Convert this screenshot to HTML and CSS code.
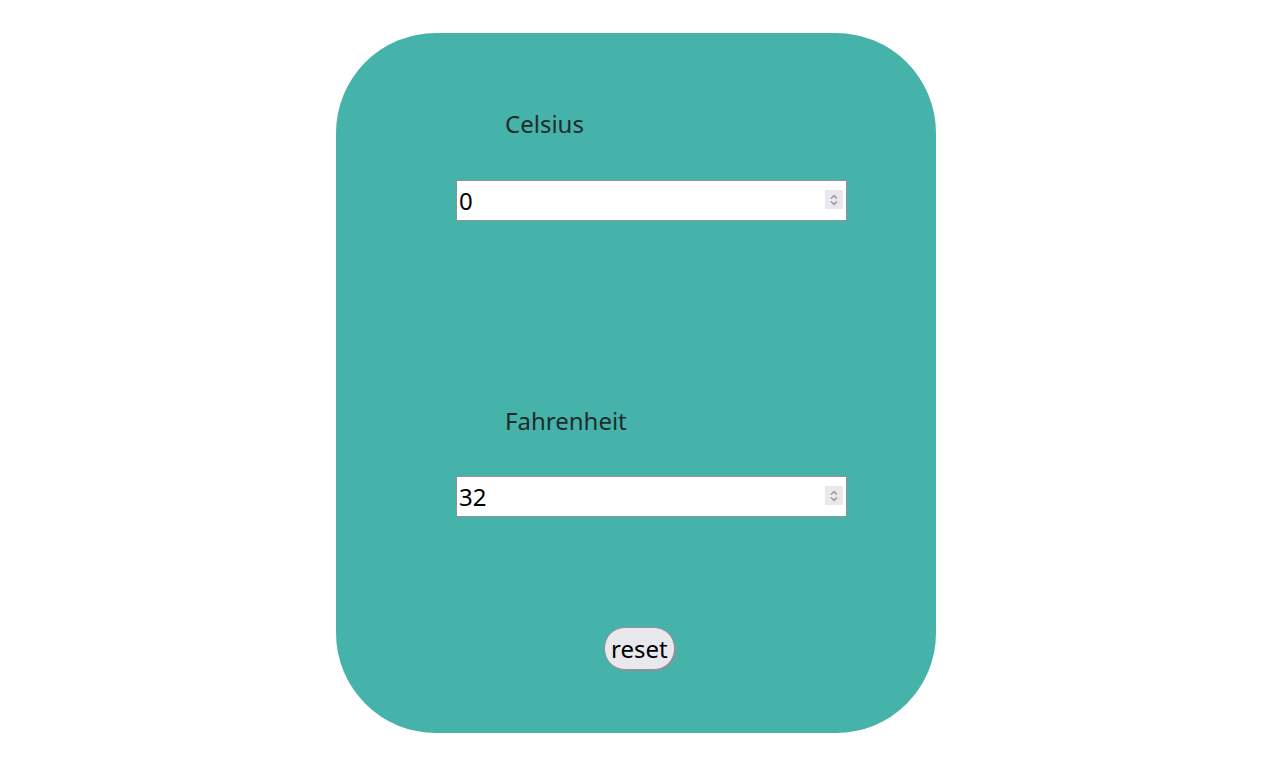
FILE: index.html
```html
<!DOCTYPE html>
<html>
<head>
<meta charset="utf-8">
<link rel="stylesheet" href="styles.css">
</head>
<body>
<div class="page">
  <div class="card">
    <label class="label" for="c">Celsius</label>
    <div class="field-wrap">
      <input class="field" id="c" type="number" value="0">
      <span class="spin"><svg width="10" height="14" viewBox="0 0 10 14"><path d="M2 5.5 L5 2.5 L8 5.5 M2 8.5 L5 11.5 L8 8.5" fill="none" stroke="#8a8a96" stroke-width="1.2"/></svg></span>
    </div>
    <label class="label label-f" for="f">Fahrenheit</label>
    <div class="field-wrap field-wrap-f">
      <input class="field" id="f" type="number" value="32">
      <span class="spin"><svg width="10" height="14" viewBox="0 0 10 14"><path d="M2 5.5 L5 2.5 L8 5.5 M2 8.5 L5 11.5 L8 8.5" fill="none" stroke="#8a8a96" stroke-width="1.2"/></svg></span>
    </div>
    <div class="actions"><button class="reset" type="button">reset</button></div>
  </div>
</div>
</body>
</html>
```

FILE: styles.css
```css
html, body {
  margin: 0;
  padding: 0;
  background: #ffffff;
}
.page {
  display: flex;
  justify-content: flex-start;
  padding: 33px 0 0 336px;
}
.card {
  width: 600px;
  height: 700px;
  box-sizing: border-box;
  background: #45b3a9;
  border-radius: 100px;
  display: flex;
  flex-direction: column;
  align-items: flex-start;
  padding: 74px 0 0 120px;
  font-family: "Noto Sans", "DejaVu Sans", sans-serif;
}
.label {
  display: block;
  margin-left: 49px;
  font-size: 24px;
  line-height: 33px;
  color: #1e2b2d;
}
.field-wrap {
  position: relative;
  margin-top: 40px;
  width: 391px;
  height: 41px;
}
.field-wrap-f {
  margin-top: 39px;
}
.field {
  display: block;
  width: 391px;
  height: 41px;
  box-sizing: border-box;
  border: 1px solid #8f8f9d;
  padding: 0 2px;
  font-family: "Noto Sans", "DejaVu Sans", sans-serif;
  font-size: 24px;
  color: #000;
  background: #fff;
  -moz-appearance: textfield;
}
.field::-webkit-inner-spin-button,
.field::-webkit-outer-spin-button {
  -webkit-appearance: none;
  margin: 0;
}
.spin {
  position: absolute;
  right: 4px;
  top: 10px;
  width: 18px;
  height: 19px;
  background: #e9e9ed;
  display: flex;
  align-items: center;
  justify-content: center;
  pointer-events: none;
}
.label-f {
  margin-top: 183px;
}
.actions {
  align-self: stretch;
  display: flex;
  justify-content: flex-start;
  padding-left: 148px;
  margin-top: 110px;
}
.reset {
  height: 43px;
  box-sizing: border-box;
  padding: 0 6px;
  border: 1px solid #8f8f9d;
  border-radius: 21px;
  background: #e9e9ed;
  box-shadow: 1px 1px 0 #8f8f9d;
  font-family: "Noto Sans", "DejaVu Sans", sans-serif;
  font-size: 24px;
  color: #000;
}
```
